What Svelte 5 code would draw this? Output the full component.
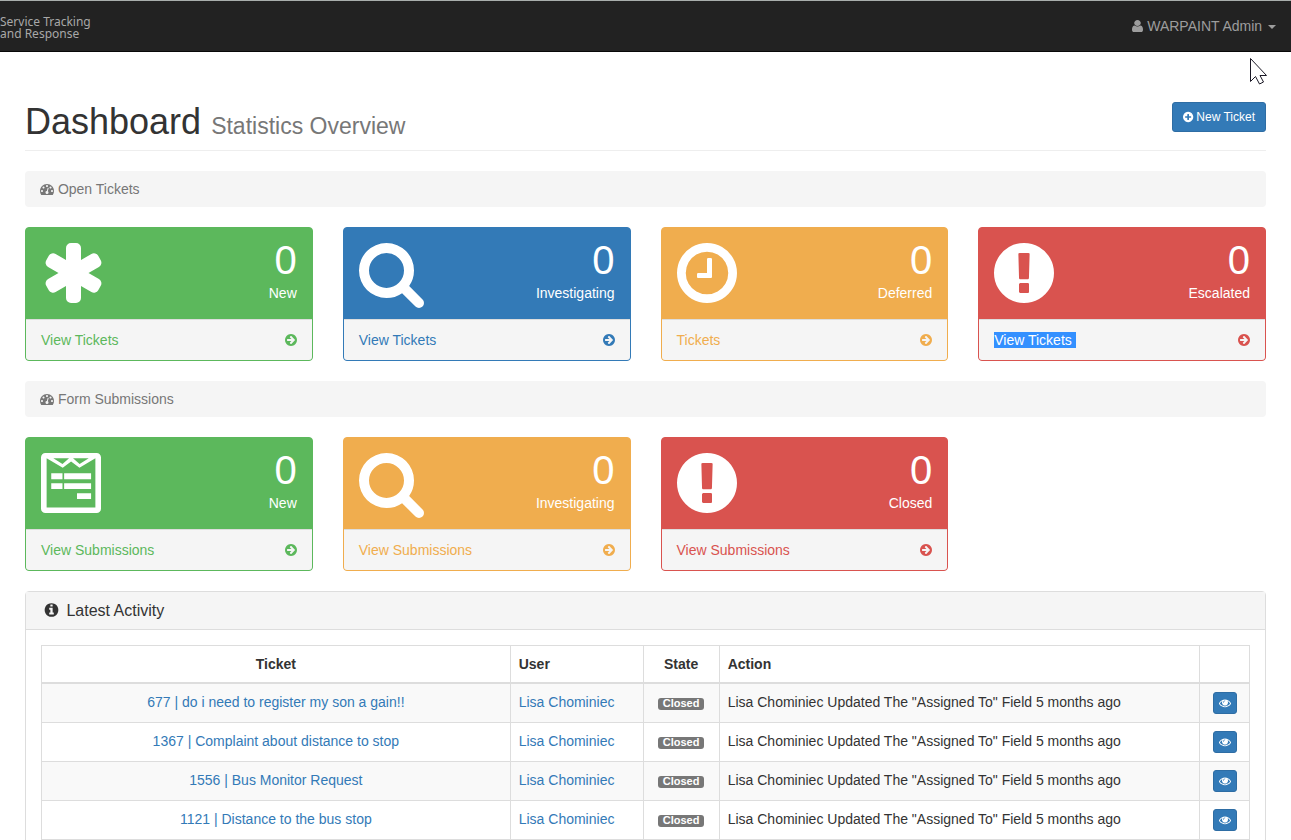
<script>
  const ring =
    'q0 209-103 385.5t-279.5 279.5-385.5 103-385.5-103-279.5-279.5-103-385.5 103-385.5 279.5-279.5 385.5-103 385.5 103 279.5 279.5 103 385.5z';
  const dot = 'q0-53-37.5-90.5t-90.5-37.5-90.5 37.5-37.5 90.5 37.5 90.5 90.5 37.5 90.5-37.5 37.5-90.5z';

  // Each icon: left edge and advance on a 1792-unit em, then the outline.
  const icons = {
    asterisk: { x: 64, w: 1664, d: 'M1546 1050q46 26 59.5 77.5t-12.5 97.5l-64 110q-26 46-77.5 59.5t-97.5-12.5l-266-153v307q0 52-38 90t-90 38h-128q-52 0-90-38t-38-90v-307l-266 153q-46 26-97.5 12.5t-77.5-59.5l-64-110q-26-46-12.5-97.5t59.5-77.5l266-154-266-154q-46-26-59.5-77.5t12.5-97.5l64-110q26-46 77.5-59.5t97.5 12.5l266 153v-307q0-52 38-90t90-38h128q52 0 90 38t38 90v307l266-153q46-26 97.5-12.5t77.5 59.5l64 110q26 46 12.5 97.5t-59.5 77.5l-266 154z' },
    search: { x: 64, w: 1664, d: 'M1216 832q0-185-131.5-316.5t-316.5-131.5-316.5 131.5-131.5 316.5 131.5 316.5 316.5 131.5 316.5-131.5 131.5-316.5zm512 832q0 52-38 90t-90 38q-54 0-90-38l-343-342q-179 124-399 124-143 0-273.5-55.5t-225-150-150-225-55.5-273.5 55.5-273.5 150-225 225-150 273.5-55.5 273.5 55.5 225 150 150 225 55.5 273.5q0 220-124 399l343 343q37 37 37 90z' },
    clock: { x: 128, w: 1536, d: 'M1024 544v448q0 14-9 23t-23 9h-320q-14 0-23-9t-9-23v-64q0-14 9-23t23-9h224v-352q0-14 9-23t23-9h64q14 0 23 9t9 23zm416 352q0-148-73-273t-198-198-273-73-273 73-198 198-73 273 73 273 198 198 273 73 273-73 198-198 73-273zm224 0' + ring },
    alert: { x: 128, w: 1536, d: 'M896 128q209 0 385.5 103t279.5 279.5 103 385.5-103 385.5-279.5 279.5-385.5 103-385.5-103-279.5-279.5-103-385.5 103-385.5 279.5-279.5 385.5-103zm128 1247v-190q0-14-9-23.5t-22-9.5h-192q-13 0-23 10t-10 23v190q0 13 10 23t23 10h192q13 0 22-9.5t9-23.5zm-2-344l18-621q0-12-10-18-10-8-24-8h-220q-14 0-24 8-10 6-10 18l17 621q0 10 10 17.5t24 7.5h185q14 0 23.5-7.5t10.5-17.5z' },
    form: { x: 128, w: 1536, d: 'M240 128H1552A112 112 0 0 1 1664 240V1552A112 112 0 0 1 1552 1664H240A112 112 0 0 1 128 1552V240A112 112 0 0 1 240 128zM272 264V1520H1520V264L1112 508L898 344L684 508zM444 264L678 408L846 264zM948 264L1116 408L1350 264zM390 648H678V798H390zM720 648H1410V798H720zM390 900H678V1050H390zM720 900H1410V1050H720zM1050 1158H1410V1308H1050z' },
    arrow: { x: 128, w: 1536, d: 'M1413 896q0-27-18-45l-91-91-362-362q-18-18-45-18t-45 18l-91 91q-18 18-18 45t18 45l189 189h-502q-26 0-45 19t-19 45v128q0 26 19 45t45 19h502l-189 189q-19 19-19 45t19 45l91 91q18 18 45 18t45-18l362-362 91-91q18-18 18-45zm251 0' + ring },
    plus: { x: 128, w: 1536, d: 'M1344 960v-128q0-26-19-45t-45-19h-256v-256q0-26-19-45t-45-19h-128q-26 0-45 19t-19 45v256h-256q-26 0-45 19t-19 45v128q0 26 19 45t45 19h256v256q0 26 19 45t45 19h128q26 0 45-19t19-45v-256h256q26 0 45-19t19-45zm320-64' + ring },
    info: { x: 128, w: 1536, d: 'M1152 1376v-160q0-14-9-23t-23-9h-96v-512q0-14-9-23t-23-9h-320q-14 0-23 9t-9 23v160q0 14 9 23t23 9h96v320h-96q-14 0-23 9t-9 23v160q0 14 9 23t23 9h448q14 0 23-9t9-23zm-128-896v-160q0-14-9-23t-23-9h-192q-14 0-23 9t-9 23v160q0 14 9 23t23 9h192q14 0 23-9t9-23zm640 416' + ring },
    user: { x: 256, w: 1280, d: 'M1536 1399q0 109-62.5 187t-150.5 78h-854q-88 0-150.5-78t-62.5-187q0-85 8.5-160.5t31.5-152 58.5-131 94-89 134.5-34.5q131 128 313 128t313-128q76 0 134.5 34.5t94 89 58.5 131 31.5 152 8.5 160.5zm-256-887q0 159-112.5 271.5t-271.5 112.5-271.5-112.5-112.5-271.5 112.5-271.5 271.5-112.5 271.5 112.5 112.5 271.5z' },
    eye: { x: 0, w: 1792, d: 'M1664 960q-152-236-381-353 61 104 61 225 0 185-131.5 316.5t-316.5 131.5-316.5-131.5-131.5-316.5q0-121 61-225-229 117-381 353 133 205 333.5 326.5t434.5 121.5 434.5-121.5 333.5-326.5zm-720-384q0-20-14-34t-34-14q-125 0-214.5 89.5t-89.5 214.5q0 20 14 34t34 14 34-14 14-34q0-86 61-147t147-61q20 0 34-14t14-34zm848 384q0 34-20 69-140 230-376.5 368.5t-499.5 138.5-499.5-139-376.5-368q-20-35-20-69t20-69q140-229 376.5-368t499.5-139 499.5 139 376.5 368q20 35 20 69z' },
    gauge: { x: 0, w: 1792, d: `M384 1152${dot}M576 704${dot}M1004 1185l101-382q6-26-7.5-48.5t-38.5-29.5-48 6.5-30 39.5l-101 382q-60 5-107 43.5t-63 98.5q-20 77 20 146t117 89 146-20 89-117q16-60-6-117t-72-91zM1664 1152${dot}M1024 512${dot}M1472 704${dot}M1792 1152q0 261-141 483-19 29-54 29h-1402q-35 0-54-29-141-221-141-483 0-182 71-348t191-286 286-191 348-71 348 71 286 191 191 286 71 348z` }
  };

  const sections = [
    {
      title: 'Open Tickets',
      cards: [
        { tone: 'green', icon: 'asterisk', label: 'New', link: 'View Tickets' },
        { tone: 'blue', icon: 'search', label: 'Investigating', link: 'View Tickets' },
        { tone: 'amber', icon: 'clock', label: 'Deferred', link: 'Tickets' },
        { tone: 'red', icon: 'alert', label: 'Escalated', link: 'View Tickets', selected: true }
      ]
    },
    {
      title: 'Form Submissions',
      cards: [
        { tone: 'green', icon: 'form', label: 'New', link: 'View Submissions' },
        { tone: 'amber', icon: 'search', label: 'Investigating', link: 'View Submissions' },
        { tone: 'red', icon: 'alert', label: 'Closed', link: 'View Submissions' }
      ]
    }
  ];

  const tickets = [
    '677 | do i need to register my son a gain!!',
    '1367 | Complaint about distance to stop',
    '1556 | Bus Monitor Request',
    '1121 | Distance to the bus stop'
  ];
</script>

{#snippet icon(name, kind = '')}
  <svg class="icon {kind} {name}" viewBox="{icons[name].x} 0 {icons[name].w} 1792" preserveAspectRatio={name === 'user' ? 'none' : 'xMidYMid'} aria-hidden="true">
    <path fill="currentColor" fill-rule="evenodd" d={icons[name].d} />
  </svg>
{/snippet}

<nav class="navbar">
  <a class="brand" href="#home">Service Tracking<br />and Response</a>
  <button class="account" type="button">{@render icon('user')} WARPAINT Admin <span class="caret"></span></button>
  <svg class="pointer" width="19" height="28" viewBox="0 0 19 28" aria-hidden="true">
    <path d="M1.5 1.5V24.5L6.5 19.5L10.5 27L14.5 25L11 18.5H17.5Z" fill="#fff" stroke="#1b1926" />
  </svg>
</nav>

<main>
  <header class="page-header">
    <h1>Dashboard <small>Statistics Overview</small></h1>
    <button class="btn new-ticket" type="button">{@render icon('plus')} New Ticket</button>
  </header>

  {#each sections as section}
    <section>
      <h2 class="crumb">{@render icon('gauge')} {section.title}</h2>
      <div class="cards">
        {#each section.cards as card}
          <article class="card {card.tone}">
            <div class="card-top">
              {@render icon(card.icon, 'large')}
              <div class="figures">
                <div class="count">0</div>
                <div>{card.label}</div>
              </div>
            </div>
            <a class="card-link" href="#list">
              <span><span class:selected={card.selected}>{card.link}</span></span>
              {@render icon('arrow')}
            </a>
          </article>
        {/each}
      </div>
    </section>
  {/each}

  <section class="panel">
    <h3>{@render icon('info')} Latest Activity</h3>
    <div class="panel-body">
      <table>
        <colgroup><col class="c-ticket" /><col class="c-user" /><col class="c-state" /><col class="c-action" /><col class="c-view" /></colgroup>
        <thead>
          <tr>
            <th class="center">Ticket</th>
            <th>User</th>
            <th class="center">State</th>
            <th>Action</th>
            <th></th>
          </tr>
        </thead>
        <tbody>
          {#each tickets as ticket}
            <tr>
              <td class="center"><a href="#ticket">{ticket}</a></td>
              <td><a href="#user">Lisa Chominiec</a></td>
              <td class="center"><span class="badge">Closed</span></td>
              <td>Lisa Chominiec Updated The "Assigned To" Field 5 months ago</td>
              <td class="center"><button class="btn view" type="button" aria-label="View ticket">{@render icon('eye')}</button></td>
            </tr>
          {/each}
        </tbody>
      </table>
    </div>
  </section>
</main>

<style>
  :global(body) {
    margin: 0;
    background: #fff;
    color: #333;
    font: 14px/20px 'Liberation Sans', Arial, sans-serif;
  }
  a {
    color: #337ab7;
    text-decoration: none;
  }
  button {
    font: inherit;
    cursor: pointer;
  }
  .icon {
    height: 1em;
    vertical-align: -2px;
    overflow: visible;
  }
  .navbar {
    position: relative;
    display: flex;
    justify-content: space-between;
    align-items: center;
    height: 50px;
    background: #222;
    border-top: 1px solid #a9aeac;
    border-bottom: 1px solid #080808;
  }
  .brand {
    color: #a8a8a8;
    padding-top: 4px;
    font: 12px/12px 'Noto Sans', sans-serif;
  }
  .account {
    padding: 15px;
    border: 0;
    background: none;
    color: #9d9d9d;
  }
  .user {
    width: 11px;
  }
  .caret {
    display: inline-block;
    margin-left: 2px;
    vertical-align: middle;
    border-top: 4px solid;
    border-left: 4px solid transparent;
    border-right: 4px solid transparent;
  }
  .pointer {
    position: absolute;
    top: 56px;
    right: 23px;
  }
  main {
    padding: 50px 25px 0;
  }
  .page-header {
    display: flex;
    justify-content: space-between;
    align-items: flex-start;
    padding-bottom: 9px;
    margin-bottom: 20px;
    border-bottom: 1px solid #eee;
  }
  h1 {
    margin: 0;
    font-size: 36px;
    font-weight: 400;
    line-height: 39px;
  }
  h1 small {
    font-size: 23px;
    line-height: 1;
    color: #777;
  }
  .btn {
    border: 1px solid #2e6da4;
    border-radius: 3px;
    background: #337ab7;
    color: #fff;
  }
  .new-ticket {
    padding: 5px 10px;
    font-size: 12px;
    line-height: 18px;
  }
  .crumb {
    margin: 0 0 20px;
    padding: 8px 15px;
    border-radius: 4px;
    background: #f5f5f5;
    color: #777;
    font-size: 14px;
    font-weight: 400;
  }
  .cards {
    display: grid;
    grid-template-columns: repeat(4, 1fr);
    gap: 30px;
    margin-bottom: 20px;
  }
  .green { --tone: #5cb85c; }
  .blue { --tone: #337ab7; }
  .amber { --tone: #f0ad4e; }
  .red { --tone: #d9534f; }
  .card {
    border: 1px solid var(--tone);
    border-radius: 4px;
    background: var(--tone);
    overflow: hidden;
  }
  .card-top {
    display: flex;
    justify-content: space-between;
    padding: 10px 15px 11px;
    color: #fff;
  }
  .large {
    height: 70px;
  }
  .figures {
    text-align: right;
  }
  .count {
    font-size: 40px;
    line-height: 45px;
  }
  .card-link {
    display: flex;
    justify-content: space-between;
    align-items: center;
    padding: 10px 15px;
    border-top: 1px solid #ddd;
    background: #f5f5f5;
    color: var(--tone);
  }
  .selected {
    padding-right: 4px;
    background: #3390ff;
    color: #fff;
  }
  .panel {
    border: 1px solid #ddd;
    border-radius: 4px;
  }
  h3 {
    margin: 0;
    padding: 10px 15px;
    border-bottom: 1px solid #ddd;
    background: #f5f5f5;
    font-size: 16px;
    font-weight: 400;
    line-height: 17px;
  }
  .info {
    width: 21px;
  }
  .panel-body {
    padding: 15px;
  }
  table {
    width: 100%;
    table-layout: fixed;
    border-collapse: separate;
    border-spacing: 0;
    border-top: 1px solid #ddd;
    border-left: 1px solid #ddd;
  }
  .c-ticket { width: 38.8%; }
  .c-user { width: 11%; }
  .c-state { width: 6.3%; }
  .c-action { width: 39.8%; }
  .c-view { width: 4.1%; }
  th,
  td {
    padding: 8px;
    border-right: 1px solid #ddd;
    border-bottom: 1px solid #ddd;
    text-align: left;
    vertical-align: top;
  }
  th {
    border-bottom-width: 2px;
  }
  tbody tr:nth-child(odd) {
    background: #f9f9f9;
  }
  .center {
    text-align: center;
  }
  .badge {
    display: inline-block;
    padding: 0 5px 2px;
    border-radius: 3px;
    background: #777;
    color: #fff;
    font-size: 11px;
    font-weight: 700;
    line-height: 10px;
  }
  .view {
    display: block;
    margin: 0 auto;
    padding: 1px 5px;
    font-size: 12px;
    line-height: 18px;
  }
</style>
